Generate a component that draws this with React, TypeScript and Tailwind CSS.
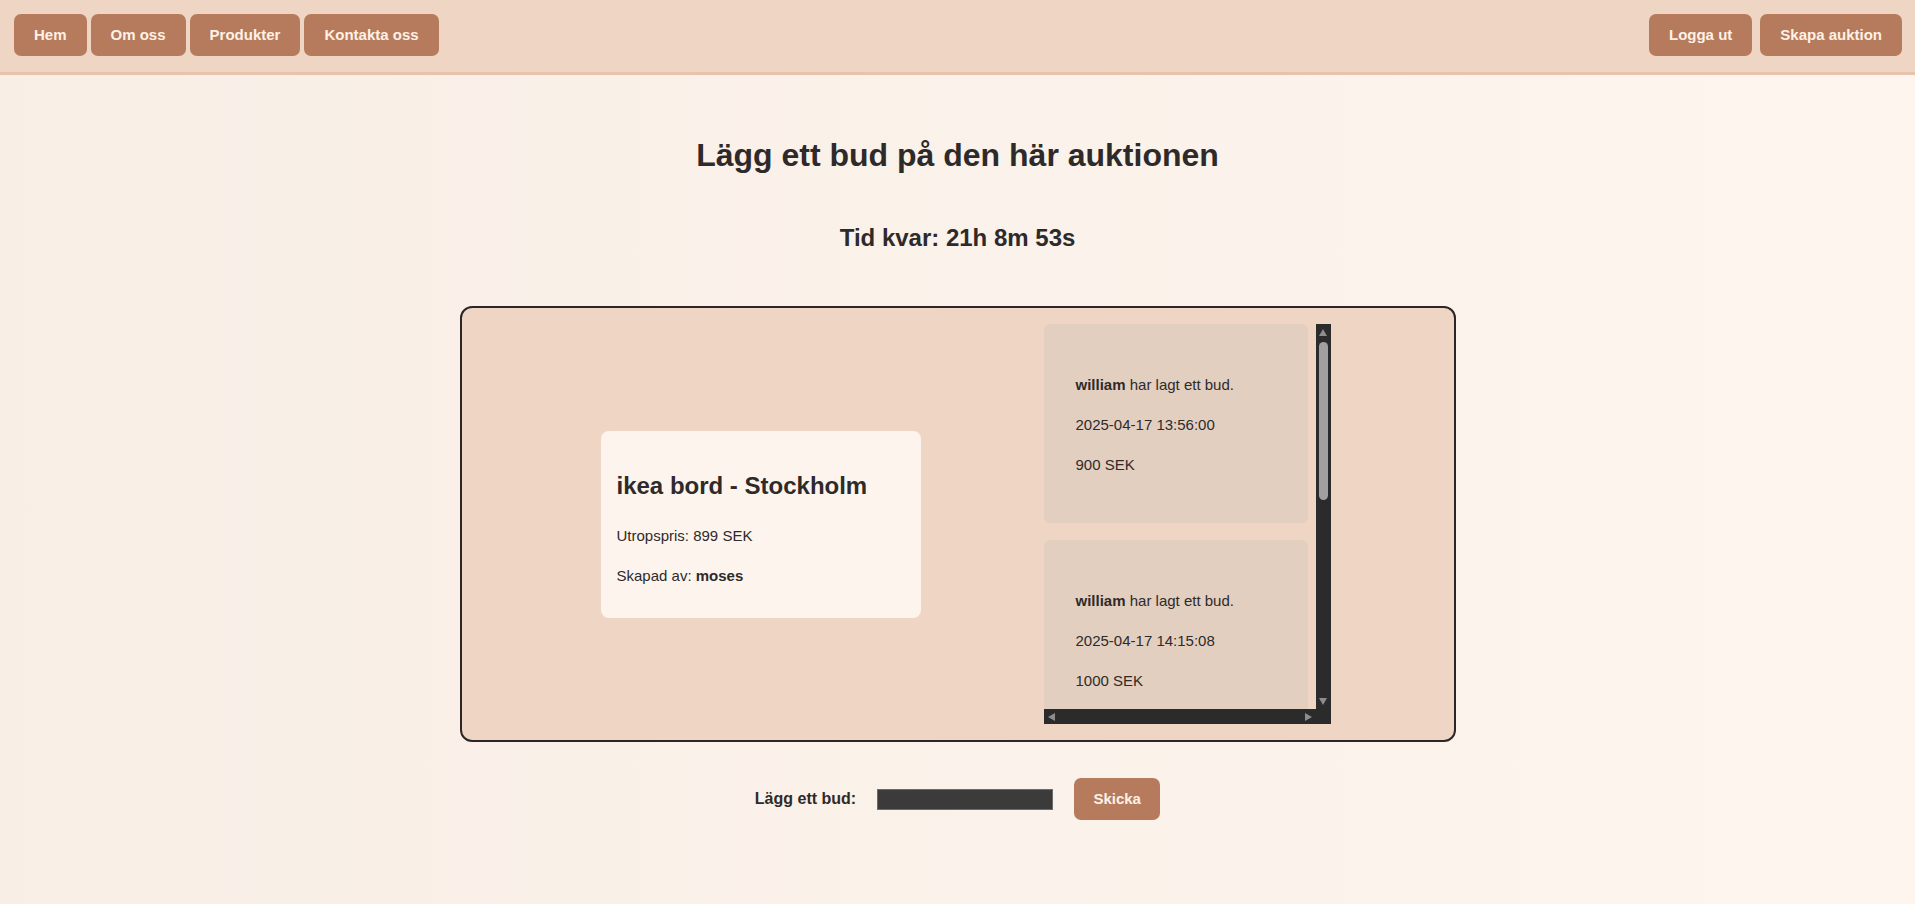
import React from "react";

const font = { fontFamily: "'Liberation Sans', Arial, sans-serif" };

function NavButton({ children }: { children: React.ReactNode }) {
  return (
    <button className="h-[42px] rounded-[7px] bg-[#b67b5c] px-[20px] text-[15px] font-bold text-[#fff1e6]">
      {children}
    </button>
  );
}

function BidCard({ time, amount }: { time: string; amount: string }) {
  return (
    <div className="w-[264px] shrink-0 rounded-[6px] bg-[#e2cfc0] pl-[32px] pt-[50px] pb-[47px] text-[15px] leading-[22px] text-[#2f2a2a]">
      <p>
        <b>william</b> har lagt ett bud.
      </p>
      <p className="mt-[18px]">{time}</p>
      <p className="mt-[18px]">{amount}</p>
    </div>
  );
}

function Triangle({ dir }: { dir: "up" | "down" | "left" | "right" }) {
  const pts = {
    up: "0,7 4,0 8,7",
    down: "0,0 8,0 4,7",
    left: "7,0 7,8 0,4",
    right: "0,0 0,8 7,4",
  }[dir];
  const vertical = dir === "up" || dir === "down";
  return (
    <svg width={vertical ? 8 : 7} height={vertical ? 7 : 8} viewBox={vertical ? "0 0 8 7" : "0 0 7 8"}>
      <polygon points={pts} fill="#8d8d8d" />
    </svg>
  );
}

export default function App() {
  return (
    <div
      style={font}
      className="min-h-[904px] bg-gradient-to-r from-[#f8eee6] to-[#fdf5ee] text-[#2f2a2a]"
    >
      <nav className="flex h-[75px] items-start justify-between border-b-[3px] border-[#e6c3aa] bg-[#efd6c4] pl-[14px] pr-[13px] pt-[14px]">
        <div className="flex gap-[4px]">
          <NavButton>Hem</NavButton>
          <NavButton>Om oss</NavButton>
          <NavButton>Produkter</NavButton>
          <NavButton>Kontakta oss</NavButton>
        </div>
        <div className="flex gap-[8px]">
          <NavButton>Logga ut</NavButton>
          <NavButton>Skapa auktion</NavButton>
        </div>
      </nav>

      <main className="flex flex-col items-center">
        <h1 className="mt-[60px] text-[32px] font-bold leading-[40px]">
          Lägg ett bud på den här auktionen
        </h1>
        <h2 className="mt-[47px] text-[24px] font-bold leading-[32px]">
          Tid kvar: 21h 8m 53s
        </h2>

        <section className="mt-[52px] flex h-[436px] w-[996px] items-center rounded-[12px] border-2 border-[#2e2626] bg-[#efd6c4] pl-[139px]">
          <div className="w-[320px] rounded-[8px] bg-[#fdf4ee] px-[16px] pt-[40px] pb-[31px]">
            <h3 className="text-[24px] font-bold leading-[30px] text-[#2f2a2a]">
              ikea bord - Stockholm
            </h3>
            <p className="mt-[24px] text-[15px] leading-[22px]">Utropspris: 899 SEK</p>
            <p className="mt-[18px] text-[15px] leading-[22px]">
              Skapad av: <b>moses</b>
            </p>
          </div>

          <div className="ml-[123px] grid grid-cols-[272px_15px] grid-rows-[385px_15px]">
            <div className="flex flex-col gap-[17px] overflow-hidden">
              <BidCard time="2025-04-17 13:56:00" amount="900 SEK" />
              <BidCard time="2025-04-17 14:15:08" amount="1000 SEK" />
            </div>
            <div className="flex flex-col items-center bg-[#2b2b2b] pt-[5px] pb-[4px]">
              <Triangle dir="up" />
              <div className="mt-[6px] h-[158px] w-[9px] rounded-full bg-[#a0a0a0]" />
              <div className="flex-1" />
              <Triangle dir="down" />
            </div>
            <div className="flex items-center justify-between bg-[#2b2b2b] pl-[4px] pr-[4px]">
              <Triangle dir="left" />
              <Triangle dir="right" />
            </div>
            <div className="bg-[#2b2b2b]" />
          </div>
        </section>

        <form
          className="mt-[36px] flex items-center gap-[21px]"
          onSubmit={(e) => e.preventDefault()}
        >
          <label className="text-[16px] font-bold">Lägg ett bud:</label>
          <input
            type="text"
            className="h-[21px] w-[176px] border border-[#6b6b6b] bg-[#3b3b3b] text-white outline-none"
          />
          <button className="h-[42px] w-[86px] rounded-[7px] bg-[#b67b5c] text-[15px] font-bold text-[#fff1e6]">
            Skicka
          </button>
        </form>
      </main>
    </div>
  );
}
